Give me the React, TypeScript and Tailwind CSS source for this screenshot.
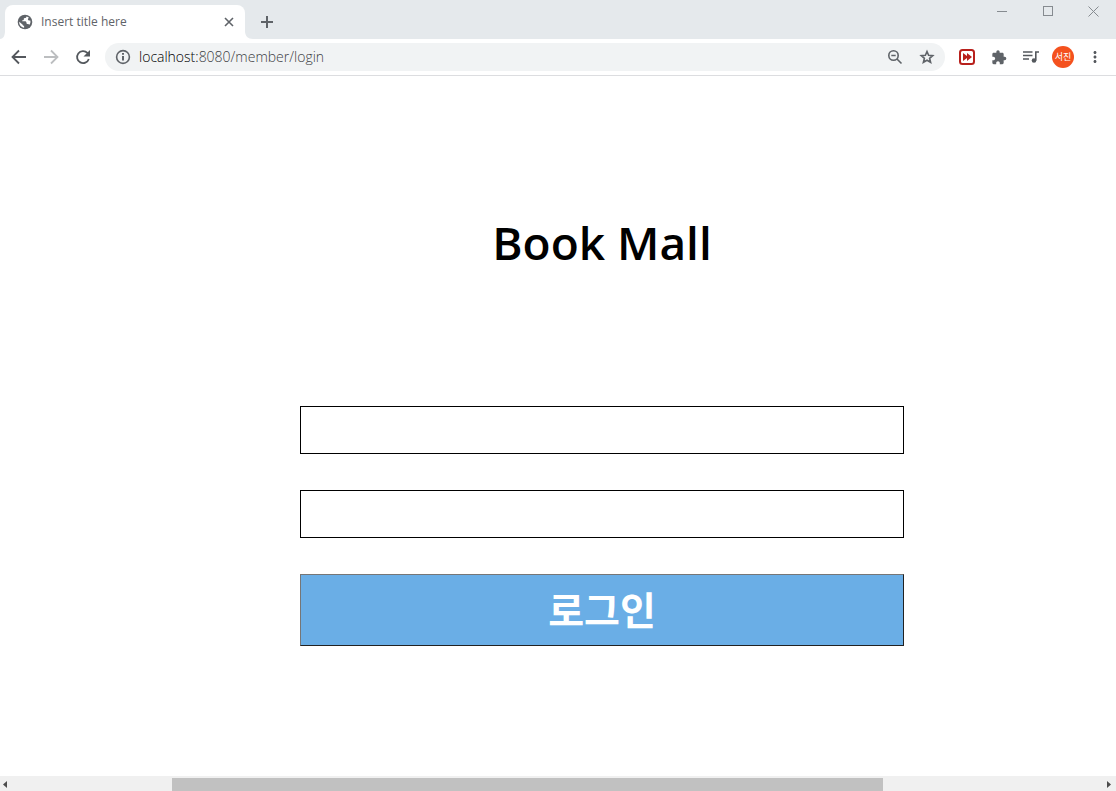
import React from "react"
import clsx from "clsx"
import {MdExtension, MdMoreVert} from "react-icons/md"

interface IconButtonProps {
  label: string
  className?: string
  children: React.ReactNode
}

const IconButton: React.FC<IconButtonProps> = ({label, className, children}) => (
  <button type="button" aria-label={label} className={clsx("flex shrink-0 items-center justify-center", className)}>
    {children}
  </button>
)

interface LineIconProps {
  width?: number
  children: React.ReactNode
}

// 16 unit grid, stroked with the text colour
const LineIcon: React.FC<LineIconProps> = ({width = 1.8, children}) => (
  <svg width="16" height="16" viewBox="0 0 16 16" fill="none" stroke="currentColor" strokeWidth={width} className="shrink-0">
    {children}
  </svg>
)

const GlobeIcon: React.FC = () => (
  <svg width="16" height="16" viewBox="0 0 16 16">
    <circle cx="8" cy="8" r="7.3" fill="#5f6368" />
    <path
      d="M9.5 2.4c-.2 1-.7 1.5-1.8 1.6-.8.1-1 .6-.9 1.3.1.7-.3 1-1.1 1-.5.1-.6.5-.5 1h2.6c1.1 0 1.7.6 1.7 1.6 0 .8.5 1 1.2 1 .9 0 1.4.3 1.7.9 1-1.3 1.3-3 .9-4.4-.7.3-1.5.2-2.1-.4-.5-.6-.3-1.3.3-1.7.3-.2.3-.6 0-1z"
      fill="#fff"
    />
    <path d="M2.2 7.8l3.3 2.7c.2.8.8 1.2 1.6 1.3v1.9C4.2 13.4 2 10.9 2.2 7.8z" fill="#fff" />
  </svg>
)

const SkipIcon: React.FC = () => (
  <svg width="16" height="16" viewBox="0 0 16 16">
    <rect x="1" y="1" width="14" height="14" rx="2.5" fill="#fff" stroke="#b8201c" strokeWidth="2" />
    <path d="M4 4l4 3V4l5 4-5 4V9l-4 3z" fill="#b8201c" />
  </svg>
)

const WindowControls: React.FC = () => (
  <div className="ml-auto flex text-[#868b90]">
    <IconButton label="Minimize" className="h-[23px] w-[46px]">
      <svg width="10" height="11" stroke="currentColor" shapeRendering="crispEdges">
        <path d="M0 5.5h10" />
      </svg>
    </IconButton>
    <IconButton label="Maximize" className="h-[23px] w-[46px]">
      <svg width="10" height="11" fill="none" stroke="currentColor" shapeRendering="crispEdges">
        <path d="M.5.5h9v9h-9z" />
      </svg>
    </IconButton>
    <IconButton label="Close window" className="h-[23px] w-[45px]">
      <svg width="11" height="11" stroke="currentColor">
        <path d="M.5.5l10 10M10.5.5l-10 10" />
      </svg>
    </IconButton>
  </div>
)

const TabStrip: React.FC = () => (
  <div className="flex h-[39px] bg-[#e5e9ec]">
    <div className="flex items-end">
      <svg width="5" height="8" viewBox="0 0 5 8" fill="#fff">
        <path d="M5 0v8H0C3 8 5 5 5 0z" />
      </svg>
      <div className="flex h-[34px] w-60 items-center rounded-t-lg bg-white pr-2 pl-3 text-[#5f6368]">
        <GlobeIcon />
        <span className="ml-2 flex-1 text-[12px] leading-4">Insert title here</span>
        <IconButton label="Close tab" className="size-4">
          <LineIcon width={1.6}>
            <path d="M4 4l8 8M12 4l-8 8" />
          </LineIcon>
        </IconButton>
      </div>
      <svg width="8" height="8" viewBox="0 0 8 8" fill="#fff">
        <path d="M0 0v8h8C3 8 0 5 0 0z" />
      </svg>
    </div>
    <IconButton label="New tab" className="mt-[5px] ml-1 h-[34px] w-5 text-[#5f6368]">
      <LineIcon width={2}>
        <path d="M8 2v12M2 8h12" />
      </LineIcon>
    </IconButton>
    <WindowControls />
  </div>
)

const Toolbar: React.FC = () => (
  <div className="flex h-[37px] items-center border-b border-[#dcdde0] bg-white pr-3 pl-[9px] text-[#54585d]">
    <div className="flex gap-3">
      <IconButton label="Back" className="size-5">
        <LineIcon>
          <path d="M15 8H2.5M8 1.5L1.5 8 8 14.5" />
        </LineIcon>
      </IconButton>
      <IconButton label="Forward" className="size-5 text-[#bcbec0]">
        <LineIcon>
          <path d="M1 8h12.5M8 1.5L14.5 8 8 14.5" />
        </LineIcon>
      </IconButton>
      <IconButton label="Reload" className="size-5">
        <LineIcon>
          <path d="M13.8 10A6 6 0 1 1 12.4 3.9L13.5 5" />
          <path d="M15 1v6.5H8.5z" fill="currentColor" stroke="none" />
        </LineIcon>
      </IconButton>
    </div>
    <div className="ml-3 flex h-7 flex-1 items-center rounded-full bg-[#f1f3f4] px-[10px] text-[#5f6368]">
      <LineIcon width={1.6}>
        <circle cx="8" cy="8" r="6.4" />
        <path d="M8 7v4.5M8 4v1.8" strokeWidth="2" />
      </LineIcon>
      <span className="ml-2 flex-1 text-[14px] leading-5 font-light text-[#3c4043]">
        <span className="text-black">localhost:</span>8080/member/login
      </span>
      <IconButton label="Zoom" className="size-4">
        <LineIcon width={1.6}>
          <circle cx="6.5" cy="6.5" r="4.7" />
          <path d="M10 10l4.5 4.5M4.3 6.5h4.4" />
        </LineIcon>
      </IconButton>
      <IconButton label="Bookmark this tab" className="ml-4 size-4">
        <LineIcon width={1.6}>
          <path d="M8 2.5l1.6 3.8 4.1.3-3.1 2.7 1 4L8 11.2l-3.6 2.1 1-4-3.1-2.7 4.1-.3z" />
        </LineIcon>
      </IconButton>
    </div>
    <div className="ml-[14px] flex items-center">
      <IconButton label="Skip extension" className="size-4">
        <SkipIcon />
      </IconButton>
      <IconButton label="Extensions" className="ml-4 size-4 text-[#5f6368]">
        <MdExtension size={17} />
      </IconButton>
      <IconButton label="Media controls" className="ml-4 size-4">
        <LineIcon width={1.6}>
          <path d="M0 3h9.5M0 6.5h9.5M0 10h6M12.8 11.5V3H16" />
          <circle cx="11" cy="11.5" r="2.3" fill="currentColor" stroke="none" />
        </LineIcon>
      </IconButton>
      <IconButton label="Profile" className="ml-[13px] size-[22px] rounded-full bg-[#f4511e] text-[9px] leading-3 text-white">
        서진
      </IconButton>
      <IconButton label="Menu" className="ml-3 size-[18px]">
        <MdMoreVert size={18} />
      </IconButton>
    </div>
  </div>
)

const LoginForm: React.FC = () => (
  <main className="flex-1 bg-white pt-[134px] pr-[212px] pb-[130px] pl-[300px]">
    <h1 className="text-center text-[46px] leading-[64px] font-semibold text-black">Book Mall</h1>
    <form className="mt-[132px] flex flex-col gap-9" onSubmit={(e) => e.preventDefault()}>
      <input type="text" aria-label="아이디" className="h-12 w-full border border-black px-3 text-xl outline-none" />
      <input type="password" aria-label="비밀번호" className="h-12 w-full border border-black px-3 text-xl outline-none" />
      <button
        type="submit"
        className="h-[72px] border border-t-[#767676] border-r-[#212121] border-b-[#212121] border-l-[#767676] bg-[#6aaee6] text-[39px] leading-[56px] font-bold text-white"
      >
        로그인
      </button>
    </form>
  </main>
)

const ScrollBar: React.FC = () => (
  <div className="flex h-[15px] items-center bg-[#f0f0f0] text-[#4d4d4d]">
    <svg width="17" height="15" fill="currentColor" className="shrink-0">
      <path d="M7 5v7L3 8.5z" />
    </svg>
    <div className="flex flex-1 self-stretch pt-[2px]">
      <div className="ml-[14.3%] w-[65.7%] bg-[#c1c1c1]" />
    </div>
    <svg width="17" height="15" fill="currentColor" className="shrink-0">
      <path d="M8 5v7l4-3.5z" />
    </svg>
  </div>
)

const App: React.FC = () => {
  return (
    <div className="flex min-h-screen flex-col bg-white font-['Open_Sans','Noto_Sans_CJK_KR',sans-serif]">
      <header>
        <TabStrip />
        <Toolbar />
      </header>
      <LoginForm />
      <ScrollBar />
    </div>
  )
}

export default App
